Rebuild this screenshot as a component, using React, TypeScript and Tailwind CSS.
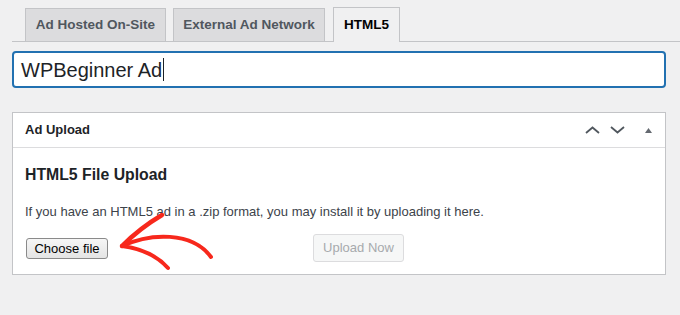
import React from "react";

export default function App() {
  return (
    <div
      className="relative w-[680px] h-[315px] overflow-hidden bg-[#f0f0f1] text-[#1d2327]"
      style={{ fontFamily: '"Liberation Sans", Arial, sans-serif' }}
    >
      {/* Tabs */}
      <div className="ml-3 mt-2 flex h-[34px] items-end gap-[7px] border-b border-[#c3c4c7] pl-[13px]">
        <div className="flex h-[33px] w-[141px] items-center justify-center border border-b-0 border-[#c3c4c7] bg-[#dcdcde] text-[13.5px] font-bold text-[#50575e]">
          Ad Hosted On-Site
        </div>
        <div className="flex h-[33px] w-[152px] items-center justify-center border border-b-0 border-[#c3c4c7] bg-[#dcdcde] text-[13.5px] font-bold text-[#50575e]">
          External Ad Network
        </div>
        <div className="-mb-px ml-px flex h-[35px] w-[67px] items-center justify-center border border-b-0 border-[#c3c4c7] bg-[#f0f0f1] text-[13.5px] font-bold text-[#000]">
          HTML5
        </div>
      </div>

      {/* Title input */}
      <div className="mx-3 mt-[9px] flex h-[37px] w-[654px] items-center rounded-[4px] border-2 border-[#2271b1] bg-white pl-[7px]">
        <span className="text-[20px] text-[#1d2327]">WPBeginner Ad</span>
        <span className="ml-px inline-block h-[23px] w-px bg-[#1d2327]" />
      </div>

      {/* Panel */}
      <div className="mx-3 mt-6 w-[654px] border border-[#c3c4c7] bg-white">
        <div className="flex h-[35px] items-center justify-between border-b border-[#dcdcde] pl-3 pr-[13px]">
          <span className="text-[13px] font-bold text-[#1d2327]">Ad Upload</span>
          <div className="flex items-center">
            <svg width="15" height="8" viewBox="0 0 15 8" className="mr-[10px]">
              <polyline points="1,7 7.5,1.5 14,7" fill="none" stroke="#50575e" strokeWidth="1.8" />
            </svg>
            <svg width="15" height="8" viewBox="0 0 15 8" className="mr-[20px]">
              <polyline points="1,1 7.5,6.5 14,1" fill="none" stroke="#50575e" strokeWidth="1.8" />
            </svg>
            <svg width="7" height="5" viewBox="0 0 7 5">
              <polygon points="0,5 3.5,0 7,5" fill="#646970" />
            </svg>
          </div>
        </div>
        <div className="px-3 pb-3 pt-[17px]">
          <h3 className="text-[15.8px] font-bold leading-[20px] text-[#1d2327]">HTML5 File Upload</h3>
          <p className="mt-[17px] text-[13px] leading-[20px] text-[#3c434a]">
            If you have an HTML5 ad in a .zip format, you may install it by uploading it here.
          </p>
          <div className="mt-3 flex h-[28px] items-center">
            <button className="ml-px h-[21px] w-[82px] rounded-[3px] border border-[#8a8a8a] bg-gradient-to-b from-[#f6f6f6] to-[#e4e4e4] text-[13px] text-black">
              Choose file
            </button>
            <button
              disabled
              className="ml-[205px] h-[28px] w-[91px] rounded-[3px] border border-[#dcdcde] bg-[#f6f7f7] text-[13px] text-[#a7aaad]"
            >
              Upload Now
            </button>
          </div>
        </div>
      </div>

      {/* Red annotation arrow */}
      <svg
        className="pointer-events-none absolute left-0 top-0"
        width="680"
        height="315"
        viewBox="0 0 680 315"
      >
        <g fill="none" stroke="#f7281c" strokeLinecap="round" strokeLinejoin="round">
          <path d="M122 246 C 150 233, 192 231, 211 257" strokeWidth="4" />
          <path d="M162 215 Q 140 228, 122 246" strokeWidth="4.5" />
          <path d="M122 246 Q 152 250, 168 268" strokeWidth="4" />
        </g>
      </svg>
    </div>
  );
}
